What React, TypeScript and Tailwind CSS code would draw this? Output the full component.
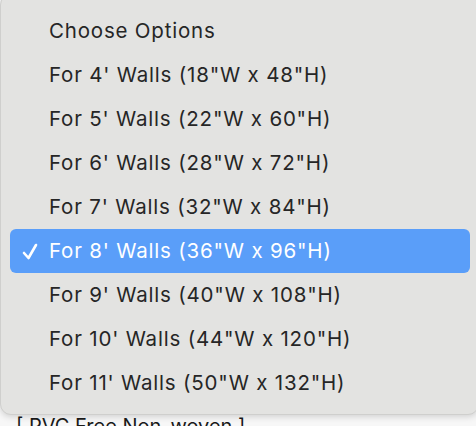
const options = [
  'Choose Options',
  `For 4' Walls (18"W x 48"H)`,
  `For 5' Walls (22"W x 60"H)`,
  `For 6' Walls (28"W x 72"H)`,
  `For 7' Walls (32"W x 84"H)`,
  `For 8' Walls (36"W x 96"H)`,
  `For 9' Walls (40"W x 108"H)`,
  `For 10' Walls (44"W x 120"H)`,
  `For 11' Walls (50"W x 132"H)`,
];

const selected = 5;

export default function App() {
  return (
    <div className="relative w-[476px] h-[426px] overflow-hidden bg-[#f7f7f7] font-['Inter',sans-serif]">
      {/* page content behind the menu */}
      <div className="pt-[414px] pl-[16px] text-[20px] leading-[24px] text-[#1a1a1a]">[ PVC Free Non-woven ]</div>

      {/* popup menu */}
      <div className="absolute left-0 top-[-6px] w-[479px] rounded-[11px] bg-[#e3e3e1] border border-[#cfcfcd] shadow-[0_2px_6px_rgba(0,0,0,0.15)] pt-[14px] pb-[9px] pl-[9px] pr-[8px]">
        {options.map((opt, i) => (
          <div
            key={opt}
            className={`relative flex items-center h-[44px] rounded-[6px] pl-[39px] text-[20.5px] tracking-[0.8px] ${
              i === selected ? 'bg-[#5a9ef9] text-white' : 'text-[#262626]'
            }`}
          >
            {i === selected && (
              <svg className="absolute left-[12px] top-[14px]" width="16" height="17" viewBox="0 0 16 17">
                <path d="M2 10 L6.5 15 L14 2" fill="none" stroke="white" strokeWidth="2.6" strokeLinecap="round" strokeLinejoin="round" />
              </svg>
            )}
            {opt}
          </div>
        ))}
      </div>
    </div>
  );
}
